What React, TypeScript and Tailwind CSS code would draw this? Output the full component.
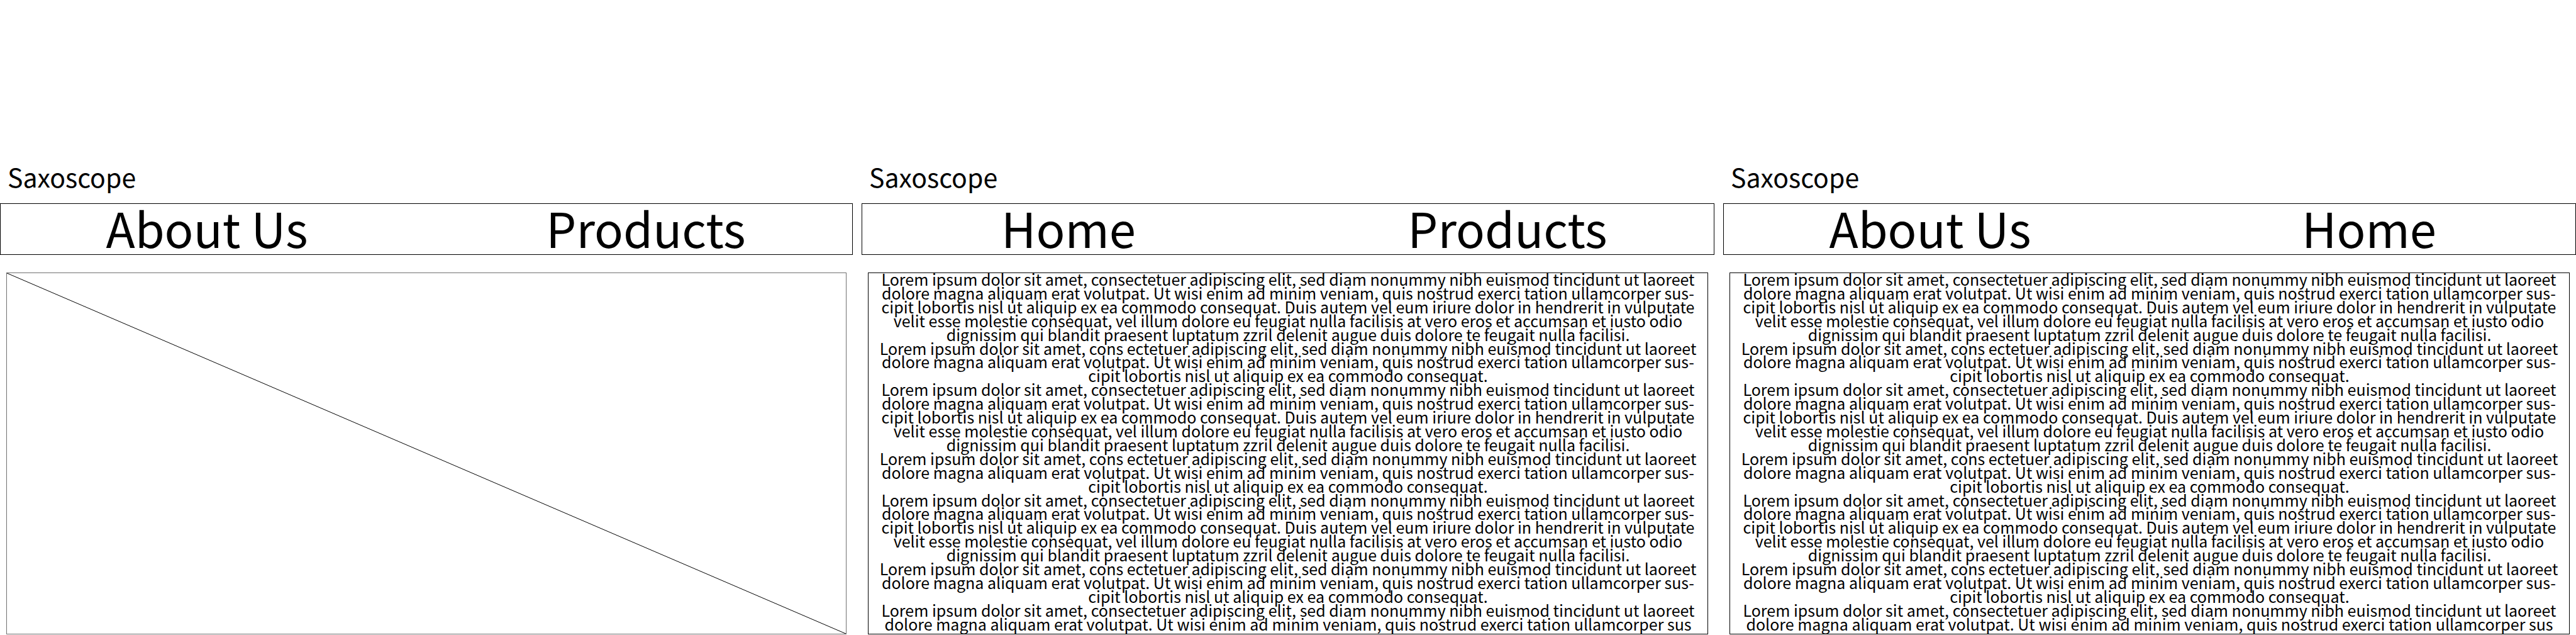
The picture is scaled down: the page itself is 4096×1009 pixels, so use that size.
type Screen = {
  id: string;
  links: [string, string];
  content: "image" | "text";
};

const screens: Screen[] = [
  { id: "home", links: ["About Us", "Products"], content: "image" },
  { id: "about-us", links: ["Home", "Products"], content: "text" },
  { id: "products", links: ["About Us", "Home"], content: "text" },
];

const passage = [
  "Lorem ipsum dolor sit amet, consectetuer adipiscing elit, sed diam nonummy nibh euismod tincidunt ut laoreet",
  "dolore magna aliquam erat volutpat. Ut wisi enim ad minim veniam, quis nostrud exerci tation ullamcorper sus-",
  "cipit lobortis nisl ut aliquip ex ea commodo consequat. Duis autem vel eum iriure dolor in hendrerit in vulputate",
  "velit esse molestie consequat, vel illum dolore eu feugiat nulla facilisis at vero eros et accumsan et iusto odio",
  "dignissim qui blandit praesent luptatum zzril delenit augue duis dolore te feugait nulla facilisi.",
  "Lorem ipsum dolor sit amet, cons ectetuer adipiscing elit, sed diam nonummy nibh euismod tincidunt ut laoreet",
  "dolore magna aliquam erat volutpat. Ut wisi enim ad minim veniam, quis nostrud exerci tation ullamcorper sus-",
  "cipit lobortis nisl ut aliquip ex ea commodo consequat.",
];

const lines = [
  ...passage,
  ...passage,
  ...passage,
  passage[0],
  "dolore magna aliquam erat volutpat. Ut wisi enim ad minim veniam, quis nostrud exerci tation ullamcorper sus",
];

function toId(label: string) {
  return label.toLowerCase().replace(" ", "-");
}

function ImagePlaceholder() {
  return (
    <div className="flex flex-1 flex-col border border-[#707070]">
      <svg
        className="h-0 w-full grow"
        viewBox="0 0 100 100"
        preserveAspectRatio="none"
        role="img"
        aria-label="Image placeholder"
      >
        <line x1="0" y1="0" x2="100" y2="100" stroke="#000" strokeWidth="1" vectorEffect="non-scaling-stroke" />
      </svg>
    </div>
  );
}

function TextBlock() {
  return (
    <p className="flex flex-1 flex-col justify-between border border-black pb-[7px] text-center text-[25px] leading-[18px] whitespace-nowrap">
      {lines.map((line, i) => (
        <span key={i}>{line}</span>
      ))}
    </p>
  );
}

function Wireframe({ screen }: { screen: Screen }) {
  return (
    <section id={screen.id} className="flex min-w-0 flex-col">
      <h1 className="pl-3 text-[41px] leading-10">Saxoscope</h1>
      <nav className="mt-[23px] flex justify-between border border-black px-[148px] pb-1.5 text-[76px] leading-[74px]">
        {screen.links.map((label) => (
          <a key={label} href={`#${toId(label)}`} className="w-[360px] text-center whitespace-nowrap">
            {label}
          </a>
        ))}
      </nav>
      <div className="mt-7 flex flex-1 flex-col px-2.5">
        {screen.content === "image" ? <ImagePlaceholder /> : <TextBlock />}
      </div>
    </section>
  );
}

export default function App() {
  return (
    <main className="grid min-h-screen grid-cols-3 gap-3.5 bg-white pt-[260px] pb-px font-['Noto_Sans_CJK_SC',sans-serif] text-black">
      {screens.map((screen) => (
        <Wireframe key={screen.id} screen={screen} />
      ))}
    </main>
  );
}
